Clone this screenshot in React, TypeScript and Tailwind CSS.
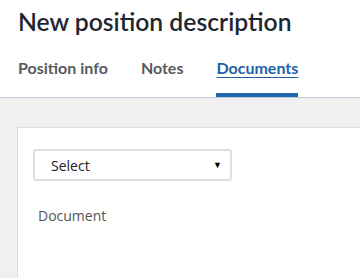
import React from "react";

const tabs = [
  { label: "Position info", active: false },
  { label: "Notes", active: false },
  { label: "Documents", active: true },
];

export default function App() {
  return (
    <div className="w-[360px] h-[278px] overflow-hidden bg-white flex flex-col">
      <div className="pl-[18px] font-['Lato',sans-serif]">
        <h1 className="pt-[7px] text-[24.7px] leading-[30px] font-semibold text-[#1e2630]">
          New position description
        </h1>
        <div className="flex gap-[33px] mt-[21px]">
          {tabs.map((t) => (
            <div
              key={t.label}
              className={
                t.active
                  ? "text-[16px] leading-[20px] font-bold text-[#1f5fa8] underline underline-offset-[3px] border-b-4 border-[#1f66ad] pb-[15px]"
                  : "text-[16px] leading-[20px] font-bold text-[#555a60] pb-[15px] border-b-4 border-transparent"
              }
            >
              {t.label}
            </div>
          ))}
        </div>
      </div>
      <div className="flex-1 bg-[#f0f0f0] border-t border-[#bccbd9] pt-[29px] pl-[17px]">
        <div className="h-full bg-white border border-[#dddddd] border-r-0 border-b-0 pt-[21px] pl-[15px] font-['Open_Sans',sans-serif]">
          <div className="w-[199px] h-[32px] border-2 border-[#dedede] rounded-[3px] flex items-center justify-between pl-[16px] pr-[8px]">
            <span className="text-[14px] text-[#222]">Select</span>
            <span className="text-[9px] text-black">▼</span>
          </div>
          <div className="mt-[24px] pl-[5px] text-[14px] text-[#555]">Document</div>
        </div>
      </div>
    </div>
  );
}
